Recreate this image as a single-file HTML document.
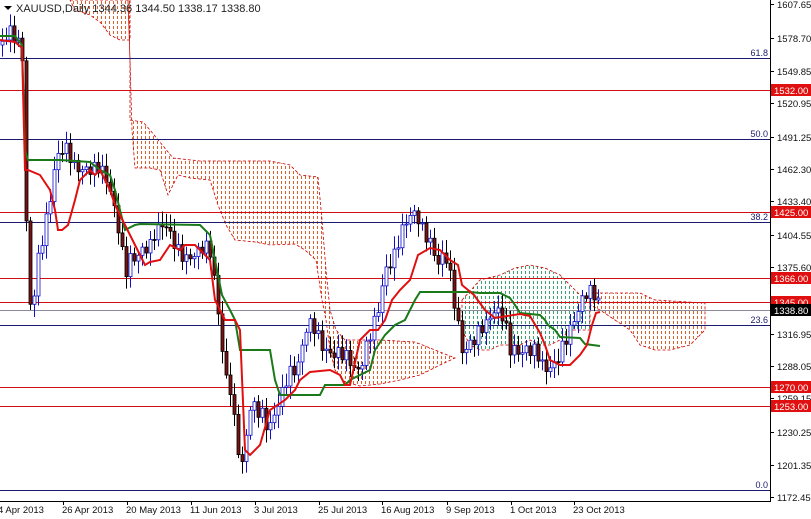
<!DOCTYPE html>
<html><head><meta charset="utf-8"><style>
html,body{margin:0;padding:0;background:#fff;width:811px;height:519px;overflow:hidden}
svg{display:block;font-family:"Liberation Sans",sans-serif}
</style></head><body>
<svg id="c" width="811" height="519" xmlns="http://www.w3.org/2000/svg">
<defs>
<pattern id="pr" width="4" height="5" patternUnits="userSpaceOnUse"><rect x="1" y="1" width="1" height="3" fill="#d8602c"/></pattern>
<pattern id="pg" width="4" height="5" patternUnits="userSpaceOnUse"><rect x="1" y="1" width="1" height="3" fill="#3aa070"/></pattern>
<clipPath id="cp"><rect x="0" y="0" width="770" height="500"/></clipPath>
</defs>
<g clip-path="url(#cp)">
<polygon points="70,0 130,0 130,40 120,40 110,35 100,22 90,15 75,10" fill="url(#pr)" stroke="#c00" stroke-dasharray="3,2" stroke-width="0.8"/>
<polygon points="128,0 130,60 130,120 143,122 150,130 173,158 200,161 270,161 290,165 300,175 318,177 322,220 326,270 330,310 336,330 345,340 380,340 415,342 440,352 455,358 440,365 420,375 400,380 380,384 360,386 345,382 335,370 330,350 326,320 322,300 316,260 305,250 295,244 270,245 255,242 235,240 226,225 218,205 210,180 190,178 178,175 168,195 160,170 150,168 135,168 132,130 130,60" fill="url(#pr)" stroke="#c00" stroke-dasharray="3,2" stroke-width="0.8"/>
<polygon points="462,300 480,280 500,275 515,268 530,265 545,268 560,275 570,285 580,295 590,300 590,330 570,330 560,340 550,345 540,345 530,340 520,345 500,345 490,350 480,350 470,345 462,330" fill="url(#pg)" stroke="#c00" stroke-dasharray="3,2" stroke-width="0.8"/>
<polygon points="590,293 640,293 655,300 705,303 705,330 700,335 690,345 670,350 655,350 640,345 630,330 615,320 600,310 590,305" fill="url(#pr)" stroke="#c00" stroke-dasharray="3,2" stroke-width="0.8"/>
<g stroke-width="1">
<line x1="0" x2="770" y1="58.5" y2="58.5" stroke="#1a1a6e"/>
<line x1="0" x2="770" y1="139.5" y2="139.5" stroke="#1a1a6e"/>
<line x1="0" x2="770" y1="222.5" y2="222.5" stroke="#1a1a6e"/>
<line x1="0" x2="770" y1="325.5" y2="325.5" stroke="#1a1a6e"/>
<line x1="0" x2="770" y1="490.5" y2="490.5" stroke="#1a1a6e"/>
<line x1="0" x2="770" y1="90.5" y2="90.5" stroke="#d01010"/>
<line x1="0" x2="770" y1="212.5" y2="212.5" stroke="#d01010"/>
<line x1="0" x2="770" y1="278.5" y2="278.5" stroke="#d01010"/>
<line x1="0" x2="770" y1="302.5" y2="302.5" stroke="#d01010"/>
<line x1="0" x2="770" y1="387.5" y2="387.5" stroke="#d01010"/>
<line x1="0" x2="770" y1="406.5" y2="406.5" stroke="#d01010"/>
<line x1="0" x2="770" y1="310.5" y2="310.5" stroke="#8a8a9a"/>
</g>
<g id="candles"></g>
<polyline fill="none" stroke="#1a7a1a" stroke-width="2" points="0,36 15,36 22,45 25,150 28,160 60,160 90,162 100,170 110,175 115,190 120,210 125,230 135,225 140,224 200,225 210,235 215,260 222,295 230,310 235,320 240,350 270,350 275,380 280,395 320,395 325,385 345,385 350,380 370,370 375,350 385,335 395,325 405,320 410,310 415,300 420,292 470,292 480,293 500,293 510,298 515,305 520,313 540,315 545,320 548,325 555,330 560,337 580,338 585,344 600,346"/>
<polyline fill="none" stroke="#e01010" stroke-width="2" points="0,40 15,42 22,48 25,170 28,170 40,175 50,190 55,210 58,230 62,230 68,225 75,200 80,180 90,170 95,175 100,170 110,190 115,205 125,225 135,245 145,265 150,262 160,260 170,245 180,250 185,245 195,245 200,250 210,260 215,300 225,320 235,320 240,330 245,450 250,455 260,445 270,410 285,400 295,390 300,380 310,372 330,370 340,375 345,385 350,385 360,340 370,330 378,330 385,320 392,300 400,290 410,280 418,255 430,248 440,250 450,260 458,265 462,285 474,295 485,310 495,318 520,314 530,316 540,333 545,345 550,360 560,365 570,365 580,355 587,345 592,325 596,313 600,312"/>
</g>
<g font-size="9" fill="#1a1a6e" text-anchor="end">
<text x="768" y="56">61.8</text><text x="768" y="137">50.0</text><text x="768" y="220">38.2</text><text x="768" y="323">23.6</text><text x="768" y="488">0.0</text>
</g>
<polygon points="4,6 12,6 8,10" fill="#000"/>
<text x="16" y="12" font-size="11" fill="#222">XAUUSD,Daily  1344.36 1344.50 1338.17 1338.80</text>
<line x1="770.5" y1="0" x2="770.5" y2="501" stroke="#000"/>
<line x1="0" y1="501.5" x2="771" y2="501.5" stroke="#000"/>
<g font-size="9.5" fill="#111" id="ylab"></g>
<g font-size="9.5" fill="#111" id="xlab"></g>
</svg>
<script>
(function(){
var NS="http://www.w3.org/2000/svg";
function el(t,a,p){var e=document.createElementNS(NS,t);for(var k in a)e.setAttribute(k,a[k]);p.appendChild(e);return e;}
var yl=document.getElementById('ylab');
[["1607.65",4],["1578.70",38],["1549.85",71],["1520.95",103],["1491.25",137],["1462.30",169],["1433.40",201],["1404.55",235],["1375.60",267],["1316.95",334],["1288.05",366],["1259.15",398],["1230.25",432],["1201.35",465],["1172.45",497]].forEach(function(a){
 el('line',{x1:771,x2:774,y1:a[1]+.5,y2:a[1]+.5,stroke:'#000'},yl);
 var t=el('text',{x:777,y:a[1]+4},yl);t.textContent=a[0];});
[["1532.00",90,"#e01010"],["1425.00",212,"#e01010"],["1366.00",278,"#e01010"],["1345.00",302,"#e01010"],["1338.80",310,"#000"],["1270.00",387,"#e01010"],["1253.00",406,"#e01010"]].forEach(function(a){
 el('rect',{x:771,y:a[1]-6,width:40,height:12,fill:a[2]},yl);
 var t=el('text',{x:774,y:a[1]+4,fill:'#fff'},yl);t.textContent=a[0];});
var xl=document.getElementById('xlab');
[["4 Apr 2013",-2],["26 Apr 2013",62],["20 May 2013",126],["11 Jun 2013",190],["3 Jul 2013",254],["25 Jul 2013",318],["16 Aug 2013",381],["9 Sep 2013",446],["1 Oct 2013",510],["23 Oct 2013",573]].forEach(function(a){
 el('line',{x1:a[1]+1.5,x2:a[1]+1.5,y1:501,y2:505,stroke:'#000'},xl);
 var t=el('text',{x:a[1],y:513},xl);t.textContent=a[0];});
var W=[[2,45],[10,40],[18,50],[22,60],[25,180],[28,300],[32,300],[38,250],[45,220],[50,200],[55,170],[60,160],[65,155],[75,165],[85,160],[95,165],[100,170],[105,185],[110,200],[115,220],[120,240],[125,270],[130,250],[135,250],[140,245],[150,250],[155,240],[165,230],[175,240],[185,250],[195,255],[205,255],[210,260],[215,290],[220,330],[225,370],[230,380],[235,420],[240,460],[243,465],[248,420],[252,410],[256,420],[262,420],[268,430],[272,415],[278,395],[285,375],[290,370],[297,375],[303,350],[308,330],[315,330],[322,340],[330,345],[338,350],[345,360],[350,370],[355,380],[360,375],[366,345],[372,320],[378,300],[385,265],[392,265],[400,245],[405,230],[410,220],[415,210],[425,225],[432,240],[438,265],[442,260],[448,270],[452,300],[458,330],[462,350],[466,345],[470,335],[475,330],[480,320],[485,325],[490,320],[495,320],[500,320],[505,330],[510,350],[515,345],[520,345],[525,340],[530,345],[535,350],[540,365],[545,380],[550,375],[555,370],[560,350],[565,335],[570,320],[575,310],[580,300],[585,295],[590,298],[595,305],[598,310]];
function f(x){for(var i=1;i<W.length;i++){if(x<=W[i][0]){var a=W[i-1],b=W[i];return a[1]+(b[1]-a[1])*(x-a[0])/(b[0]-a[0]);}}return W[W.length-1][1];}
var g=document.getElementById('candles');var prev=f(2);
for(var x=2;x<=598;x+=4){
 var c=f(x)+Math.sin(x*1.7)*9+Math.cos(x*0.9)*6;var o=prev;prev=c;
 var bt=Math.min(o,c),bb=Math.max(o,c);if(bb-bt<1)bb=bt+1;
 var hi=bt-3-Math.abs(Math.sin(x*2.3))*10,lo=bb+3+Math.abs(Math.cos(x*1.3))*10;
 var bull=c<o;
 el('line',{x1:x+.5,x2:x+.5,y1:hi,y2:lo,stroke:bull?'#1010c8':'#000'},g);
 el('rect',{x:x-1,y:bt,width:3,height:bb-bt,fill:bull?'#fff':'#7a1010',stroke:bull?'#1010c8':'#000','stroke-width':0.8},g);
}
})();
</script>
</body></html>
